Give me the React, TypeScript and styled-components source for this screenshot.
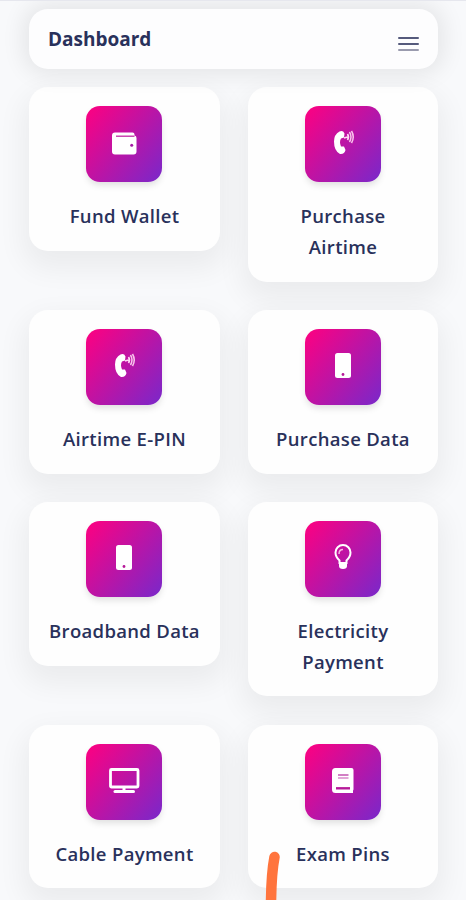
import React from 'react';
import styled, { createGlobalStyle } from 'styled-components';

const GlobalStyle = createGlobalStyle`
  *, *::before, *::after { box-sizing: border-box; }
  html, body { margin: 0; overflow: hidden; background: #f8f9fb; }
  body { font-family: 'Open Sans', 'Noto Sans', sans-serif; color: #29315b; }
`;

const Page = styled.main`
  position: relative;
  height: 900px;
  overflow: hidden;
  padding: 9px 28px 0 29px;
  border-top: 1px solid #e6e7ee;
  background: #f8f9fb;
`;

const Header = styled.header`
  position: relative;
  z-index: 1;
  display: flex;
  align-items: center;
  justify-content: space-between;
  height: 60px;
  margin-top: -1px;
  padding: 0 19px;
  border-radius: 19px;
  background: #fdfdfe;
  box-shadow: 0 0 22px 6px rgba(0, 0, 0, 0.08);
`;

const Title = styled.h1`
  margin: 0;
  font-size: 19px;
  line-height: 30px;
  font-weight: 700;
  letter-spacing: 0;
`;

const MenuButton = styled.button`
  display: flex;
  flex-direction: column;
  gap: 4px;
  width: 21px;
  margin-top: 10px;
  padding: 0;
  border: 0;
  background: none;
`;

const MenuBar = styled.span<{ $faded?: boolean }>`
  height: 2px;
  border-radius: 1px;
  background: ${(p) => (p.$faded ? '#9a9bae' : '#555a7c')};
`;

const Grid = styled.section`
  display: grid;
  grid-template-columns: 191px 190px;
  column-gap: 28px;
  row-gap: 28.2px;
  align-items: start;
  margin-top: 18px;
`;

const Card = styled.article`
  display: flex;
  flex-direction: column;
  align-items: center;
  gap: 19px;
  padding: 19px;
  border-radius: 19px;
  background: #fefefe;
  box-shadow: 0 12px 28px 6px rgba(0, 0, 0, 0.054);
`;

const Tile = styled.div`
  display: grid;
  place-items: center;
  width: 76px;
  height: 76px;
  margin-right: 1px;
  border-radius: 14px;
  background: linear-gradient(310deg, #7928ca, #ff0080);
  box-shadow: 0 4px 7px -1px rgba(0, 0, 0, 0.13);
`;

const Glyph = styled.svg`
  display: block;
  width: 32px;
  height: 32px;
  margin-top: -4px;
  fill: none;
`;

const Label = styled.h2`
  margin: 0 -4px;
  max-width: 154px;
  font-size: 18.5px;
  line-height: 30.8px;
  font-weight: 550;
  letter-spacing: 0.32px;
  text-align: center;
`;

const Marker = styled.svg`
  position: absolute;
  left: 261px;
  top: 847px;
  width: 24px;
  height: 54px;
  z-index: 2;
`;

const WalletIcon = () => (
  <Glyph viewBox="0 0 32 32">
    <path d="M7 6.500h17.500q2 0 2 2v1q2 0 2 2.500v13.500q0 3-3 3H7q-3 0-3-3v-16q0-3 3-3Z" fill="#fff" />
    <path d="M8 10.200h18.500" stroke="#c12aa4" strokeWidth="1.300" />
    <circle cx="23.700" cy="19.200" r="1.500" fill="#a51aa5" />
  </Glyph>
);

const PhoneIcon = () => (
  <Glyph viewBox="0 0 32 32">
    <path d="M12.500 5.500q3.500-1.500 5 2l-.5 4-3 1q-2 3.500 0 8h3l1.500 3.500q-1 4.500-5.500 4-6-3-6-12.500 0-7 5.500-10Z" fill="#fff" />
    <path d="M17 12l3.500-1M20.500 8q2 3 0 6" stroke="#ffd9f4" strokeWidth="1.600" />
    <path d="M22.500 6q3 5 0 10M24.500 5q3.500 6 0 12" stroke="#f9c5ec" strokeWidth="1.500" />
  </Glyph>
);

const MobileIcon = () => (
  <Glyph viewBox="0 0 32 32">
    <rect x="8" y="4" width="16" height="25" rx="2.500" fill="#fff" />
    <circle cx="16" cy="25.500" r="1.400" fill="#b61999" />
  </Glyph>
);

const BulbIcon = () => (
  <Glyph viewBox="0 0 32 32">
    <path d="M12.500 22v-2.500Q8.500 16 8.500 11.500a7.500 7.500 0 0 1 15 0Q23.500 16 19.500 19.500V22Z" stroke="#fff" strokeWidth="2" />
    <path d="M12 13q0-4.500 4-4.500" stroke="#f7b6e3" strokeWidth="1.500" />
    <path d="M12 21.500h8v3.500q0 3-4 3t-4-3Z" fill="#fff" />
  </Glyph>
);

const MonitorIcon = () => (
  <Glyph viewBox="0 0 32 32">
    <rect x="2.500" y="5.500" width="27.500" height="17.500" rx="1" stroke="#fff" strokeWidth="2.800" />
    <path d="M16 23v4" stroke="#fff" strokeWidth="3" />
    <path d="M7 27.500h18.500" stroke="#fff" strokeWidth="3" strokeLinecap="round" />
  </Glyph>
);

const BookIcon = () => (
  <Glyph viewBox="0 0 32 32">
    <path d="M8.500 4h16q2 0 2 2v19q0 1-.5 1.500V29H8.500q-3.500 0-3.500-3.500v-18Q5 4 8.500 4Z" fill="#fff" />
    <path d="M11 11h10.500" stroke="#cd71be" strokeWidth="1.800" />
    <path d="M11 14h10.500" stroke="#d88bcb" strokeWidth="1.500" />
    <path d="M9 24.300h14" stroke="#b61999" strokeWidth="2.400" />
  </Glyph>
);

const services = [
  { name: 'Fund Wallet', Icon: WalletIcon },
  { name: 'Purchase Airtime', Icon: PhoneIcon },
  { name: 'Airtime E-PIN', Icon: PhoneIcon },
  { name: 'Purchase Data', Icon: MobileIcon },
  { name: 'Broadband Data', Icon: MobileIcon },
  { name: 'Electricity Payment', Icon: BulbIcon },
  { name: 'Cable Payment', Icon: MonitorIcon },
  { name: 'Exam Pins', Icon: BookIcon },
];

export default function App() {
  return (
    <>
      <GlobalStyle />
      <Page>
        <Header>
          <Title>Dashboard</Title>
          <MenuButton aria-label="Open menu">
            <MenuBar />
            <MenuBar />
            <MenuBar $faded />
          </MenuButton>
        </Header>
        <Grid>
          {services.map(({ name, Icon }) => (
            <Card key={name}>
              <Tile>
                <Icon />
              </Tile>
              <Label>{name}</Label>
            </Card>
          ))}
        </Grid>
        <Marker viewBox="0 0 24 54">
          <path d="M13.500 9Q10 27 10 60" fill="none" stroke="#ff743d" strokeWidth="10.500" strokeLinecap="round" />
        </Marker>
      </Page>
    </>
  );
}
